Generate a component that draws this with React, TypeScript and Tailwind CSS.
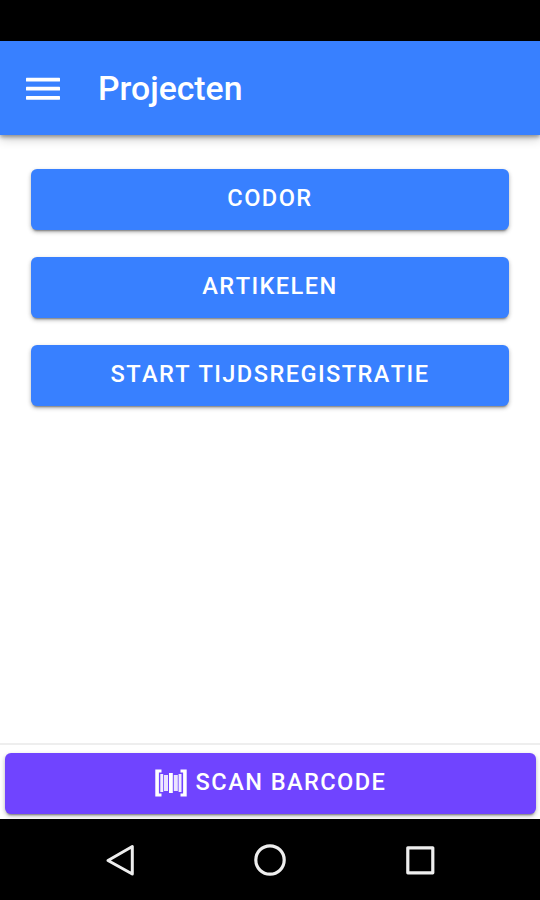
import React from "react";

function ProjectButton({ label }: { label: string }) {
  return (
    <button className="flex h-[61px] w-full items-center justify-center rounded-[6px] bg-[#3880ff] pb-[2px] text-[23.6px] leading-none font-medium tracking-[1.42px] text-white uppercase [font-kerning:none] shadow-[0_3px_2px_-2px_rgba(0,0,0,0.35),0_2px_4px_rgba(0,0,0,0.3)]">
      {label}
    </button>
  );
}

function MenuIcon() {
  return (
    <svg className="mt-[2px]" width="34" height="24" viewBox="0 0 34 24" fill="white" aria-hidden="true">
      <rect x="0" y="0.8" width="34" height="3.8" rx="0.6" />
      <rect x="0" y="9.8" width="34" height="3.8" rx="0.6" />
      <rect x="0" y="18.9" width="34" height="3.8" rx="0.6" />
    </svg>
  );
}

function BarcodeIcon() {
  return (
    <svg className="-mt-px" width="32" height="28" viewBox="0 0 32 28" fill="white" aria-hidden="true">
      <path d="M.3 .5h6.200v3H3.900v21h2.600v3H.3z" />
      <path d="M31.700 .5h-6.200v3h2.600v21h-2.600v3h6.200z" />
      <rect x="5.300" y="5" width="2.900" height="18" opacity="0.9" />
      <rect x="9" y="6" width="4" height="16" opacity="0.85" />
      <rect x="14" y="4" width="3.800" height="20" />
      <rect x="18.800" y="6" width="4" height="16" opacity="0.85" />
      <rect x="23.600" y="5" width="2.900" height="18" opacity="0.9" />
    </svg>
  );
}

export default function App() {
  return (
    <div className="flex h-[900px] w-[540px] flex-col overflow-hidden bg-white font-[Roboto,sans-serif]">
      <div className="h-[41px] shrink-0 bg-black" />
      <header className="flex h-[94px] shrink-0 items-center bg-[#3880ff] pl-[26px] text-white shadow-[0_2px_4px_rgba(0,0,0,0.35),0_4px_10px_rgba(0,0,0,0.2)]">
        <MenuIcon />
        <h1 className="mt-[2px] ml-[38px] text-[33.75px] leading-none font-medium">Projecten</h1>
      </header>
      <main className="flex grow flex-col gap-[27px] px-[31px] pt-[34px]">
        <ProjectButton label="Codor" />
        <ProjectButton label="Artikelen" />
        <ProjectButton label="Start tijdsregistratie" />
      </main>
      <footer className="h-[76px] shrink-0 border-t-2 border-[#eeeeee] bg-white pt-[8px] pr-[4px] pl-[5px]">
        <button className="flex h-[61px] w-full items-center justify-center rounded-[6px] bg-[#7044ff] text-[23.6px] leading-none font-medium tracking-[1.42px] text-white uppercase shadow-[0_3px_2px_-2px_rgba(0,0,0,0.35),0_2px_4px_rgba(0,0,0,0.3)]">
          <BarcodeIcon />
          <span className="ml-[9px] pb-[2px]">Scan barcode</span>
        </button>
      </footer>
      <nav className="relative z-10 flex h-[81px] shrink-0 items-center justify-between bg-black pr-[105px] pl-[105px]">
        <svg width="30" height="34" viewBox="0 0 30 34" fill="none" stroke="#eee" strokeWidth="3" strokeLinejoin="round" aria-hidden="true">
          <path d="M27.300 3.500v27.500L3 17.500z" />
        </svg>
        <svg className="-ml-[1px]" width="34" height="34" viewBox="0 0 34 34" fill="none" stroke="#eee" strokeWidth="3.200" aria-hidden="true">
          <circle cx="17" cy="17" r="14.200" />
        </svg>
        <svg width="30" height="34" viewBox="0 0 30 34" fill="none" stroke="#eee" strokeWidth="3.200" strokeLinejoin="round" aria-hidden="true">
          <rect x="2.800" y="4.800" width="25" height="25" />
        </svg>
      </nav>
    </div>
  );
}
